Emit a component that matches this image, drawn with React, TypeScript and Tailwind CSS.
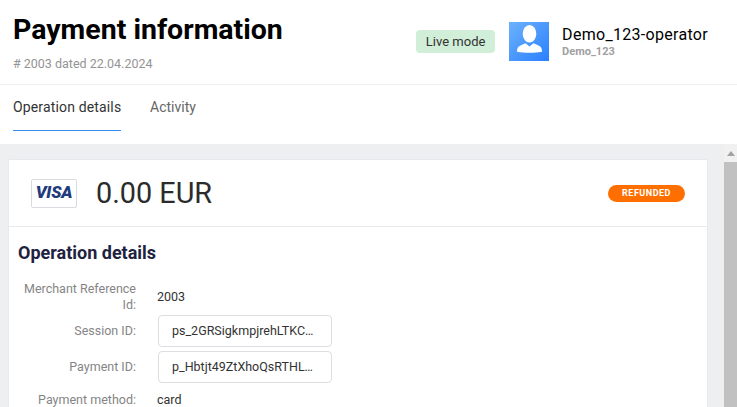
import React from 'react'

const rows = [
  { label: 'Session ID:', value: 'ps_2GRSigkmpjrehLTKC…' },
  { label: 'Payment ID:', value: 'p_Hbtjt49ZtXhoQsRTHL…' },
]

const UserIcon = () => (
  <svg viewBox="0 0 40 40" preserveAspectRatio="none" className="h-[39px] w-[40px]">
    <defs>
      <linearGradient id="avatarBg" x1="0" y1="0" x2="1" y2="1">
        <stop offset="0" stopColor="#6cb2fb" />
        <stop offset="1" stopColor="#2a7fff" />
      </linearGradient>
    </defs>
    <rect width="40" height="40" fill="url(#avatarBg)" />
    <ellipse cx="20.5" cy="12" rx="6.800" ry="9" fill="#fff" />
    <path d="M8 30.500c0-3.500.8-5.500 3.500-6.500l5-2.200 4 3.400 4-3.400 5 2.200c2.700 1 3.500 3 3.500 6.500-4 .7-8 1-12.500 1S12 31.200 8 30.500z" fill="#fff" />
  </svg>
)

export default function App() {
  return (
    <div className="h-[407px] w-[737px] overflow-hidden bg-white font-['Roboto',sans-serif]">
      <header className="flex h-[85px] items-start justify-between border-b border-[#eeeff1] pl-[13px] pr-[29px]">
        <div className="pt-[11px]">
          <h1 className="text-[28.500px] leading-[38px] font-bold text-black">Payment information</h1>
          <p className="mt-[6px] text-[12.500px] leading-[18px] text-[#949494]">
            # 2003 dated 22.04.2024
          </p>
        </div>
        <div className="flex items-center pt-[22px]">
          <span className="flex h-[23px] w-[79px] items-center justify-center rounded-[4px] bg-[#d1eed8] text-[13px] text-[#333]">
            Live mode
          </span>
          <div className="ml-[14px]">
            <UserIcon />
          </div>
          <div className="ml-[13px]">
            <div className="text-[16px] leading-[20px] tracking-[0.3px] text-black">Demo_123-operator</div>
            <div className="text-[11px] leading-[14px] font-bold text-[#a0a0a0]">Demo_123</div>
          </div>
        </div>
      </header>

      <nav className="flex h-[59px] gap-[29px] bg-white pl-[13px]">
        <div className="h-[46px] w-[108px] border-b border-[#3b8bf5] pt-[13px] text-[14px] leading-[18px] tracking-[0.15px] whitespace-nowrap text-[#333]">
          Operation details
        </div>
        <div className="pt-[13px] text-[14px] leading-[18px] text-[#666]">Activity</div>
      </nav>

      <div className="flex h-[263px] bg-[#eeeff1]">
        <main className="flex-1 overflow-hidden pt-[15px] pl-[8px] pr-[16px]">
          <section className="rounded-[2px] border border-[#e8e9ec] bg-white">
            <div className="flex h-[67px] items-center justify-between border-b border-[#e8e9ec] pl-[22px] pr-[22px]">
              <div className="flex items-center gap-[19px]">
                <div className="flex h-[29px] w-[46px] items-center justify-center rounded-[2px] border border-[#d9dbe0] bg-white text-[17px] font-black italic tracking-[-0.2px] text-[#1f3a7d]">
                  VISA
                </div>
                <div className="text-[28.800px] leading-[34px] text-[#2b2b2b]">0.00 EUR</div>
              </div>
              <span className="flex h-[17px] w-[77px] items-center justify-center rounded-full bg-[#ff6f00] pt-[1px] text-[9px] font-bold tracking-[0.5px] text-white">
                REFUNDED
              </span>
            </div>

            <div className="pl-[9px] pt-[14px]">
              <h2 className="text-[18px] leading-[24px] font-bold text-[#1e2240]">Operation details</h2>

              <div className="mt-[16px] flex items-center">
                <div className="w-[118px] text-right text-[12.500px] leading-[16px] text-[#858585]">
                  Merchant Reference Id:
                </div>
                <div className="ml-[21px] text-[12.500px] text-[#333]">2003</div>
              </div>

              <div className="mt-[2px] flex flex-col gap-[4px]">
                {rows.map((row) => (
                  <div key={row.label} className="flex items-center">
                    <div className="w-[118px] text-right text-[12.500px] text-[#858585]">{row.label}</div>
                    <div className="ml-[22px] flex h-[32px] w-[174px] items-center rounded-[4px] border border-[#dcdee2] pl-[13px]">
                      <span className="whitespace-nowrap text-[12.500px] text-[#333]">{row.value}</span>
                    </div>
                  </div>
                ))}
              </div>

              <div className="mt-[8px] flex items-center">
                <div className="w-[118px] text-right text-[12.500px] text-[#858585]">Payment method:</div>
                <div className="ml-[21px] text-[12.500px] text-[#333]">card</div>
              </div>
            </div>
          </section>
        </main>

        <div className="flex w-[13px] flex-col bg-[#f1f1f1]">
          <div className="flex h-[18px] items-center justify-center">
            <div className="h-0 w-0 border-x-[4px] border-b-[5px] border-x-transparent border-b-[#a3a3a3]" />
          </div>
          <div className="flex-1 bg-[#c1c1c1]" />
        </div>
      </div>
    </div>
  )
}
